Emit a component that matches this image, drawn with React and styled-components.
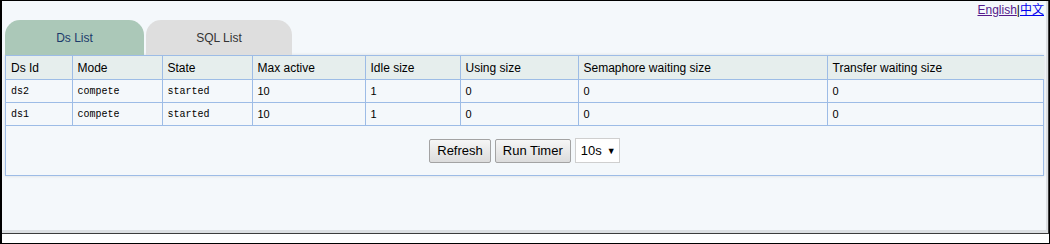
import React from 'react';
import styled, { createGlobalStyle } from 'styled-components';

const GlobalStyle = createGlobalStyle`
  html, body {
    margin: 0;
    padding: 0;
    background: #fff;
  }
  body {
    font-family: 'Liberation Sans', Arial, sans-serif;
    font-size: 12px;
  }
`;

const columns = [
  { title: 'Ds Id', width: 66 },
  { title: 'Mode', width: 90 },
  { title: 'State', width: 90 },
  { title: 'Max active', width: 113 },
  { title: 'Idle size', width: 95 },
  { title: 'Using size', width: 118 },
  { title: 'Semaphore waiting size', width: 249 },
  { title: 'Transfer waiting size', width: 217 },
];

const rows = [
  ['ds2', 'compete', 'started', '10', '1', '0', '0', '0'],
  ['ds1', 'compete', 'started', '10', '1', '0', '0', '0'],
];

export default function App() {
  return (
    <>
      <GlobalStyle />
      <Frame>
        <Viewport>
          <LangBar>
            <LangLink visited href="#">English</LangLink>|<LangLink href="#">中文</LangLink>
          </LangBar>
          <Tabs>
            <Tab active>Ds List</Tab>
            <Tab>SQL List</Tab>
          </Tabs>
          <Panel>
            <Table>
              <colgroup>
                {columns.map((c) => <col key={c.title} style={{ width: c.width }} />)}
              </colgroup>
              <thead>
                <tr>
                  {columns.map((c) => <Th key={c.title}>{c.title}</Th>)}
                </tr>
              </thead>
              <tbody>
                {rows.map((r) => (
                  <tr key={r[0]}>
                    {r.map((v, i) => <Td key={i} mono={i < 3}>{v}</Td>)}
                  </tr>
                ))}
              </tbody>
            </Table>
            <Controls>
              <Button>Refresh</Button>
              <Button>Run Timer</Button>
              <Select>10s <Arrow>▼</Arrow></Select>
            </Controls>
          </Panel>
        </Viewport>
      </Frame>
    </>
  );
}

const Frame = styled.div`
  box-sizing: border-box;
  width: 1050px;
  height: 244px;
  border: 1px solid #000;
  border-left-width: 2px;
  background: #fff;
`
const Viewport = styled.div`
  box-sizing: border-box;
  height: 233px;
  padding: 0 4px 0 3px;
  background: #f4f8fb;
  border-bottom: 1px solid #3c3c3c;
  border-right: 1px solid #3c3c3c;
  box-shadow: inset -2px -3px 0 #dcdfe2;
`
const LangBar = styled.div`
  height: 19px;
  text-align: right;
  line-height: 15px;
  padding-top: 2px;
  box-sizing: border-box;
  font-size: 12px;
  color: #000;
`
const LangLink = styled.a`
  color: ${props => props.visited ? '#551a8b' : '#0000ee'};
  text-decoration: underline;
  font-family: 'Liberation Sans', 'Noto Sans CJK SC', sans-serif;
`
const Tabs = styled.div`
  display: flex;
  gap: 2px;
  height: 35px;
`
const Tab = styled.div`
  width: ${props => props.active ? '139px' : '146px'};
  height: 35px;
  display: flex;
  align-items: center;
  justify-content: center;
  border-radius: 15px 15px 0 0;
  background: ${props => props.active ? '#abc8b8' : '#dedede'};
  color: ${props => props.active ? '#1c3a6b' : '#333'};
  font-size: 12px;
`
const Panel = styled.div`
  border: 1px solid #9dbce6;
  border-top: none;
  box-shadow: 0 0 3px rgba(0, 0, 0, 0.12);
`
const Table = styled.table`
  width: 100%;
  table-layout: fixed;
  border-collapse: collapse;
  font-size: 12px;
`
const Th = styled.th`
  height: 23px;
  padding: 0 5px;
  text-align: left;
  font-weight: normal;
  background: #e6eeed;
  border: 1px solid #9dbce6;
  &:first-child { border-left: none; }
  &:last-child { border-right: none; }
`
const Td = styled.td`
  height: 22px;
  padding: 0 5px;
  border: 1px solid #9dbce6;
  font-family: ${props => props.mono ? "'Liberation Mono', monospace" : "'Liberation Sans', Arial, sans-serif"};
  font-size: ${props => props.mono ? '10px' : '11px'};
  &:first-child { border-left: none; }
  &:last-child { border-right: none; }
`
const Controls = styled.div`
  display: flex;
  justify-content: center;
  align-items: center;
  gap: 4px;
  height: 49px;
`
const Button = styled.button`
  height: 24px;
  padding: 0 7px;
  font-family: 'Liberation Sans', Arial, sans-serif;
  font-size: 13px;
  color: #000;
  border: 1px solid #a3a3a3;
  border-radius: 2px;
  background: linear-gradient(#f6f6f6, #dcdcdc);
`
const Select = styled.div`
  box-sizing: border-box;
  height: 25px;
  width: 45px;
  display: flex;
  align-items: center;
  padding-left: 5px;
  gap: 5px;
  background: #fff;
  border: 1px solid #cfcfcf;
  font-size: 13px;
`
const Arrow = styled.span`
  font-size: 9px;
`
